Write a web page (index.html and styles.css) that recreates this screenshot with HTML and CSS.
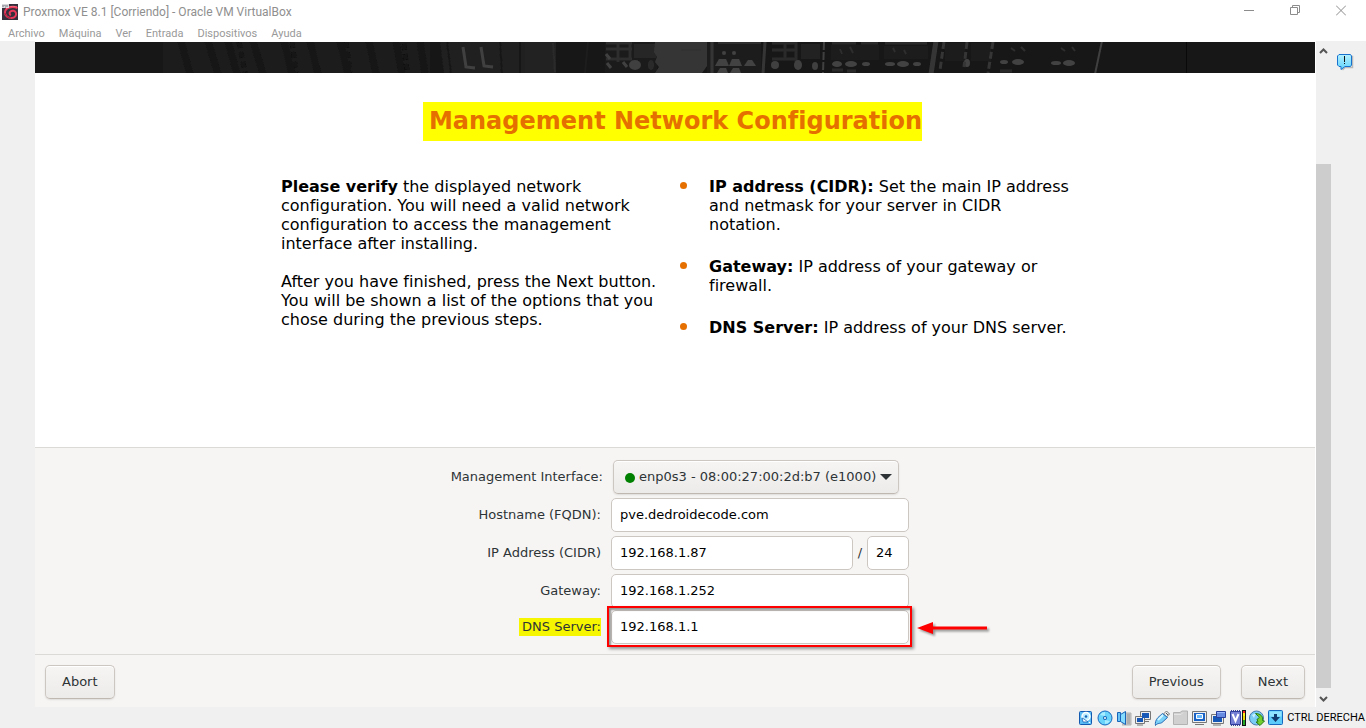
FILE: index.html
```html
<!DOCTYPE html>
<html lang="es">
<head>
<meta charset="utf-8">
<title>Proxmox VE 8.1 [Corriendo] - Oracle VM VirtualBox</title>
<link rel="stylesheet" href="styles.css">
</head>
<body>
<div class="window">
  <header class="titlebar">
    <svg class="app-icon" width="16" height="16" viewBox="0 0 16 16" aria-hidden="true">
      <rect width="16" height="16" fill="#35303c"/>
      <path d="M15.500 4C10 2 3.500 3.500 3 8c-.3 4 3 6 6.500 6 3.500 0 5-2.500 4.500-5-.8-2.500-4-3-5.500-1.500-1.500 1.200-1 3 .5 3.500" fill="none" stroke="#e8395a" stroke-width="2"/>
      <path d="M15 3C11 1.500 6 2.500 4 5" fill="none" stroke="#ff6d82"/>
      <path d="M3 9c.5 3 3 5 6 5" fill="none" stroke="#a81e3c"/>
      <rect width="7" height="4" fill="#d9d9dd"/>
      <path d="M1 1v2M3 1v1M3 3h1M5 1v2" stroke="#77777f" fill="none"/>
    </svg>
    <span class="title">Proxmox VE 8.1 [Corriendo] - Oracle VM VirtualBox</span>
    <div class="window-buttons">
      <button type="button" aria-label="Minimizar"><svg width="10" height="11" viewBox="0 0 10 11"><path d="M0 5.500h10" stroke="#8c8c8c"/></svg></button>
      <button type="button" aria-label="Restaurar"><svg width="10" height="11" viewBox="0 0 10 11" fill="none" stroke="#8c8c8c"><path d="M.5 2.500h7v7h-7zM2.500 2.500v-2h7v7h-2"/></svg></button>
      <button type="button" aria-label="Cerrar"><svg width="10" height="11" viewBox="0 0 10 11"><path d="M0 .500l10 10M10 .500l-10 10" stroke="#8c8c8c"/></svg></button>
    </div>
  </header>
  <nav class="menubar">
    <button type="button">Archivo</button>
    <button type="button">Máquina</button>
    <button type="button">Ver</button>
    <button type="button">Entrada</button>
    <button type="button">Dispositivos</button>
    <button type="button">Ayuda</button>
  </nav>

  <div class="workspace">
    <main class="guest">
      <div class="banner">
        <svg width="1280" height="31" viewBox="0 0 1280 31" aria-hidden="true">
          <defs>
            <filter id="soft" x="-5%" y="-20%" width="110%" height="140%"><feGaussianBlur stdDeviation=".6"/></filter>
          </defs>
          <rect width="1280" height="31" fill="#171717"/>
          <rect x="128" width="267" height="31" fill="#1c1c1c"/>
          <g stroke="#161616" stroke-width="7" filter="url(#soft)">
            <path d="M146-1l9 33M173-1l10 33M193-1l9 33M218-1l10 33M249-1l8 33M275-1l8 33M305-1l8 33M334-1l7 33M361-1l6 33M385-1l5 33"/>
            <path d="M204 0l6 31M257 0l4 31M311 0l4 31M369 2l3 27" stroke="#131313" stroke-width="5" stroke-dasharray="6 4"/>
          </g>
          <rect x="395" width="128" height="31" fill="#202020"/>
          <g filter="url(#soft)">
            <path d="M395 0h10l4 31h-14z" fill="#171717"/>
            <path d="M412 0l4 31M465 0l2 31M485 0v31" stroke="#191919" stroke-width="2"/>
            <rect x="490" width="33" height="31" fill="#242424"/>
            <path d="M428 5l3 20 9 1M446 5l3 19 9 1" fill="none" stroke="#404040" stroke-width="3"/>
            <path d="M518 1l2 29" stroke="#2a2a2a" stroke-width="2"/>
          </g>
          <rect x="521" width="49" height="31" fill="#171717"/>
          <path d="M550 31l3-31" stroke="#1d1d1d" stroke-width="2"/>
          <rect x="570" width="52" height="31" fill="#1b1b1b"/>
          <g filter="url(#soft)">
            <path d="M571 1h26M571 7h26M571 17h26M583 0v20M595 0v18" stroke="#2e2e2e" stroke-width="3"/>
            <path d="M571 12l4 5M572 21l4 5M588 20l4 5" stroke="#404040" stroke-width="3"/>
            <rect x="599" y="2" width="22" height="14" fill="#262626"/>
            <ellipse cx="600" cy="23" rx="6" ry="5" fill="#3f3f3f"/>
            <ellipse cx="616" cy="23" rx="3" ry="5" fill="#2b2b2b"/>
            <path d="M620 0h52v24l-5 7h-47l4-6-4-5 2-5-3-5z" fill="#363636"/>
            <path d="M646 8h20" stroke="#2b2b2b" stroke-width="1" fill="none"/>
            <rect x="672" y="0" width="54" height="31" fill="#1f1f1f"/>
            <path d="M677 0v31M730 0l-2 31" stroke="#363636" stroke-width="3"/>
            <path d="M683 1h43" stroke="#2d2d2d" stroke-width="2"/>
            <g fill="#424242">
              <circle cx="689" cy="11" r="2"/><circle cx="699" cy="11" r="2"/>
              <path d="M680 24l4-7h7l3 7zM694 24l3-7h7l3 7zM709 24l4-6h4l4 6zM682 31l3-5h6l2 5zM695 31l3-5h6l2 5z"/>
            </g>
            <path d="M737 1h24M737 8h24M737 17h24M750 0v18M761 0v20" stroke="#292929" stroke-width="3"/>
            <g fill="#3f3f3f"><circle cx="740" cy="23" r="4"/><ellipse cx="763" cy="23" rx="4" ry="5"/><ellipse cx="780" cy="24" rx="3" ry="4"/></g>
            <rect x="766" y="2" width="19" height="15" fill="#212121"/>
            <path d="M789 0l-1 31" stroke="#404040" stroke-width="2" stroke-dasharray="8 2"/>
            <path d="M797 1h24M826 1h17M850 1h42" stroke="#2c2c2c" stroke-width="3"/>
            <g fill="#1c1c1c"><rect x="796" y="3" width="48" height="15"/><rect x="849" y="4" width="44" height="13"/><rect x="910" y="1" width="20" height="18"/><rect x="936" y="1" width="20" height="18"/></g>
            <g stroke="#2e2e2e" stroke-width="2"><path d="M805 7l2 5M815 5l3 6M858 6l2 4M869 8l2 4M976 6l4 3M986 5l4 4M1026 6l4 3M1037 5l3 4"/></g>
            <g fill="#434343"><ellipse cx="802" cy="22" rx="5" ry="3"/><ellipse cx="816" cy="22" rx="6" ry="3"/><ellipse cx="831" cy="22" rx="4" ry="2"/><ellipse cx="855" cy="22" rx="5" ry="2"/><ellipse cx="868" cy="22" rx="6" ry="3"/><ellipse cx="882" cy="22" rx="4" ry="2"/><ellipse cx="932" cy="21" rx="3" ry="4"/><ellipse cx="969" cy="20" rx="4" ry="2"/><ellipse cx="983" cy="20" rx="6" ry="3"/><ellipse cx="1021" cy="21" rx="5" ry="2"/><ellipse cx="1034" cy="21" rx="6" ry="3"/></g>
            <path d="M797 28h11M812 29h9M965 29h12" stroke="#2b2b2b" stroke-width="3"/>
            <path d="M901-1l-5 33" stroke="#363636" stroke-width="5"/>
            <path d="M909 0l-4 28M932 0l-3 25M958 0l-5 31" stroke="#343434" stroke-width="3" stroke-dasharray="7 3"/>
            <path d="M1067-1l-7 33" stroke="#3f3f3f" stroke-width="2"/>
          </g>
          <path d="M1151.500 0v31" stroke="#090909"/>
        </svg>
      </div>

      <section class="intro">
        <h1><span class="heading-mark">Management Network Configuration</span></h1>
        <div class="columns">
          <div class="copy">
            <p><b>Please verify</b> the displayed network configuration. You will need a valid network configuration to access the management interface after installing.</p>
            <p>After you have finished, press the Next button. You will be shown a list of the options that you chose during the previous steps.</p>
          </div>
          <ul class="hints">
            <li><b>IP address (CIDR):</b> Set the main IP address and netmask for your server in CIDR notation.</li>
            <li><b>Gateway:</b> IP address of your gateway or firewall.</li>
            <li><b>DNS Server:</b> IP address of your DNS server.</li>
          </ul>
        </div>
      </section>

      <form class="settings">
        <div class="row row-interface">
          <label for="iface">Management Interface:</label>
          <div class="select-wrap">
            <select id="iface"><option>enp0s3 - 08:00:27:00:2d:b7 (e1000)</option></select>
            <span class="link-dot"></span>
            <svg class="caret" width="12" height="6" viewBox="0 0 12 6" aria-hidden="true"><path d="M0 0h12L6 6z" fill="#2e3436"/></svg>
          </div>
        </div>
        <div class="row">
          <label for="host">Hostname (FQDN):</label>
          <div class="field"><input id="host" type="text" value="pve.dedroidecode.com"></div>
        </div>
        <div class="row">
          <label for="ip">IP Address (CIDR)</label>
          <div class="field"><input id="ip" type="text" value="192.168.1.87"><span class="slash">/</span><input class="mask" type="text" value="24" aria-label="Netmask"></div>
        </div>
        <div class="row">
          <label for="gw">Gateway:</label>
          <div class="field"><input id="gw" type="text" value="192.168.1.252"></div>
        </div>
        <div class="row row-dns">
          <label for="dns"><span class="label-mark">DNS Server:</span></label>
          <div class="field">
            <input id="dns" type="text" value="192.168.1.1">
            <span class="callout"></span>
            <svg class="arrow" width="80" height="24" viewBox="0 0 80 24" aria-hidden="true"><path d="M1 12l16-6v4.500h54v3H17V18z" fill="#f00"/></svg>
          </div>
        </div>
      </form>

      <footer class="actions">
        <button type="button">Abort</button>
        <button type="button" class="push">Previous</button>
        <button type="button">Next</button>
      </footer>
    </main>

    <div class="scrollbar">
      <svg width="9" height="6" viewBox="0 0 9 6" aria-hidden="true"><path d="M1 5l3.500-3.500L8 5" fill="none" stroke="#555" stroke-width="2"/></svg>
      <div class="track"><div class="thumb"></div></div>
      <svg width="9" height="6" viewBox="0 0 9 6" aria-hidden="true"><path d="M1 1l3.500 3.500L8 1" fill="none" stroke="#555" stroke-width="2"/></svg>
    </div>
    <aside class="side">
      <svg width="17" height="17" viewBox="0 0 17 17" role="img" aria-label="Notificaciones">
        <defs><linearGradient id="bubble" x2="0" y2="1"><stop stop-color="#b5f1ff"/><stop offset="1" stop-color="#5fd2fb"/></linearGradient></defs>
        <path d="M3 2.500h12.500v11H8L5.500 16" fill="none" stroke="#b9b9b9" stroke-width="1.500"/>
        <path d="M2 .500h11.500l1 1.500v9l-1 1.500H8L4 15.500v-3H2L.5 11V2z" fill="url(#bubble)" stroke="#1a72cf"/>
        <path d="M7 2h1v6H7zM7 9h1v1H7z" fill="#111"/>
      </svg>
    </aside>
  </div>

  <footer class="statusbar">
    <svg width="16" height="16" viewBox="0 0 16 16" aria-hidden="true">
      <rect x="1.500" y="1.500" width="12" height="13" rx="1" fill="#59bcf4" stroke="#1459b0"/>
      <circle cx="8" cy="6.500" r="4" fill="#b9edff" stroke="#fff" stroke-width="1.500"/><circle cx="8" cy="6.500" r="1.300" fill="#1764b8"/>
      <path d="M4 8l1 4h5l-4-3z" fill="#fff" stroke="#1764b8" stroke-width=".8"/><circle cx="11.500" cy="12.500" r=".8" fill="#fff"/>
    </svg>
    <svg width="16" height="16" viewBox="0 0 16 16" aria-hidden="true">
      <circle cx="8" cy="8" r="7" fill="#6ad4fb" stroke="#1768bf"/><path d="M3 5a6 6 0 0 1 5-3v4zM13 11a6 6 0 0 1-5 3v-4z" fill="#a8ecff"/><circle cx="8" cy="8" r="2" fill="#1764b8"/><circle cx="8" cy="8" r="1" fill="#fff"/>
    </svg>
    <svg width="16" height="16" viewBox="0 0 16 16" aria-hidden="true">
      <path d="M7 3h8v12H6" fill="#c4c4c4" stroke="#b2b2b2"/><path d="M11 5h3M11 7h3M11 9h3M11 11h3M11 13h3" stroke="#999"/>
      <path d="M1.500 2.500h3v9h-3z" fill="#69c3f5" stroke="#1764b8"/><path d="M4.500 4.500l5-3v13l-5-3z" fill="#86dcff" stroke="#1764b8"/>
    </svg>
    <svg width="16" height="16" viewBox="0 0 16 16" aria-hidden="true">
      <g fill="#eee" stroke="#777"><path d="M5.500 1.500h10v8h-10zM8 11.500h6"/><path d="M.5 6.500h9v7h-9zM2 15h6"/></g>
      <path d="M7 3h7v5H7zM2 8h6v4H2z" fill="#1757b5"/>
    </svg>
    <svg width="16" height="16" viewBox="0 0 16 16" aria-hidden="true">
      <path d="M9.500 4L12.500 1l3 3-3 3z" fill="#eee" stroke="#777"/><path d="M12 3l2 2" stroke="#555"/>
      <path d="M8.500 3.500l5 4-5.500 5c-2 1.500-4 0-6.500 3C1 13 1.500 10 4 7.500z" fill="#78cff8" stroke="#296bb4"/><path d="M9 5L4 10" stroke="#d2f5ff" stroke-width="2"/>
    </svg>
    <svg width="16" height="16" viewBox="0 0 16 16" aria-hidden="true">
      <path d="M.5 14.500v-12H7l2-1.500h5.500v13.500z" fill="#d0d0d0" stroke="#b2b2b2"/><path d="M1 4.500h7l2-2" fill="none" stroke="#e4e4e4"/>
    </svg>
    <svg width="16" height="16" viewBox="0 0 16 16" aria-hidden="true">
      <path d="M.5 1.500h14v11h-14z" fill="#eee" stroke="#777"/><path d="M2 3h11v8H2z" fill="#1b62c5"/><path d="M4.500 4.500h6v4h-6z" fill="#6bbcff" stroke="#fff"/><path d="M3 14.500h9" stroke="#777"/>
    </svg>
    <svg width="16" height="16" viewBox="0 0 16 16" aria-hidden="true">
      <path d="M.5 4.500h12v9H.5z" fill="#eee" stroke="#777"/><path d="M2 6h9v6H2z" fill="#1757b5"/><path d="M2 15h8" stroke="#777"/><path d="M5.500 1.500h9v6h-9z" fill="#668be1" stroke="#293e9c"/><path d="M6 2.500h8" stroke="#9ebbff"/>
    </svg>
    <svg width="16" height="16" viewBox="0 0 16 16" aria-hidden="true">
      <path d="M.5 1.500h10v13H.5z" fill="#747fd4" stroke="#303c99"/><path d="M1 .500h9M1 15.500h9" stroke="#3e4697" stroke-dasharray="1 1"/><path d="M2.500 4l3 7 3-7" fill="none" stroke="#fff" stroke-width="2"/>
      <path d="M12 0h4v16h-4z" fill="#111"/><path d="M13 1h2v5h-2z" fill="#ffee19"/><path d="M13 1h2v2h-2z" fill="#f22"/><path d="M13 6h2v9h-2z" fill="#f2d800"/><path d="M13 10h2v5h-2z" fill="#24a528"/>
    </svg>
    <svg width="16" height="16" viewBox="0 0 16 16" aria-hidden="true">
      <circle cx="7.500" cy="8" r="7" fill="#79cdf5" stroke="#4a79ad"/><path d="M3 5l4-2-2 5z" fill="#c8effd"/>
      <path d="M6.500 3.500L9 6c2 1 1 3-1 3l1 3H7l4 3.500 4.500-4.500-2-.5c1-4-2-7-7-7z" fill="#72ce2f" stroke="#287b16"/>
    </svg>
    <svg width="16" height="16" viewBox="0 0 16 16" aria-hidden="true">
      <rect x=".5" y=".5" width="14" height="14" rx="1" fill="#5ccbfa" stroke="#1768bf"/><path d="M1.500 1.500h12v5h-12z" fill="#91e4ff"/><path d="M6 4h3v3h3l-4.500 5L3 7h3z" fill="#123c70"/>
    </svg>
    <span class="hostkey">CTRL DERECHA</span>
  </footer>
</div>
</body>
</html>
```

FILE: styles.css
```css
* { box-sizing: border-box; }
body { margin: 0; background: #fff; color: #000; font-family: "DejaVu Sans", sans-serif; }
button, input, select { font: inherit; color: inherit; }
svg { display: block; flex: none; }
.window { display: flex; flex-direction: column; min-height: 100vh; }

.titlebar { display: flex; align-items: center; height: 24px; padding: 0 2px; color: #8f8f8f; font: 12px/20px Roboto, "Open Sans", sans-serif; }
.title { margin-left: 5px; }
.window-buttons { display: flex; margin-left: auto; padding-bottom: 4px; }
.window-buttons button { display: flex; justify-content: center; width: 46px; padding: 0; border: 0; background: none; }
.menubar { display: flex; gap: 14px; height: 17px; padding-left: 8px; color: #999; font: 11px/17px Roboto, "Open Sans", sans-serif; }
.menubar button { padding: 1px 0 0; border: 0; background: none; }

.workspace { display: flex; flex: 1; padding-left: 35px; background: #f0f0f0; }
.guest { display: flex; flex: 1; flex-direction: column; min-width: 0; border-top: 1px solid #fff; border-right: 1px solid #fff; background: #fff; }
.banner { height: 31px; overflow: hidden; background: #171717; }

.intro { flex: 1; padding: 29px 16px 20px; }
h1 { display: flex; justify-content: center; margin: 0 0 36px; font-size: 24px; line-height: 39px; color: #e57000; }
.heading-mark { margin-right: 5px; padding-left: 6px; background: #ff0; }
.columns { display: grid; grid-template-columns: 376px 388px; justify-content: center; gap: 24px; font-size: 16px; line-height: 19px; }
.copy p { margin: 0 0 19px; }
.hints { display: grid; align-content: start; gap: 23px; margin: 0; padding: 0 0 0 28px; list-style: none; }
.hints li { position: relative; }
.hints li::before { content: ""; position: absolute; top: 5px; left: -29px; width: 7px; height: 7px; border-radius: 50%; background: #e57000; }

.settings { display: grid; gap: 4px; padding: 12px 16px 10px; border-top: 1px solid #dcdad7; background: #f6f5f4; color: #2e3436; font-size: 13px; }
.row { display: grid; grid-template-columns: 160px 298px; gap: 10px; justify-content: center; align-items: center; }
.row label { padding-bottom: 2px; text-align: right; white-space: nowrap; }
.row-interface { grid-template-columns: 162px 286px; padding-right: 10px; }
.field { position: relative; display: flex; }
.field input { flex: 1; min-width: 0; height: 34px; padding: 0 8px 2px; border: 1px solid #cdc7c2; border-radius: 5px; background: #fff; color: #000; }
.field input.mask { flex: none; width: 42px; }
.slash { width: 14px; line-height: 34px; text-align: center; }
.select-wrap { position: relative; }
.select-wrap select { display: block; width: 100%; height: 34px; padding: 0 8px 2px 25px; appearance: none; }
.select-wrap select, .actions button { border: 1px solid #cdc7c2; border-bottom-color: #bfb8b1; border-radius: 5px; background: linear-gradient(#f6f5f4, #edebe9); box-shadow: 0 1px 2px #0000001a, inset 0 1px #fff; }
.link-dot { position: absolute; top: 13px; left: 12px; width: 10px; height: 10px; border-radius: 50%; background: #008000; }
.caret { position: absolute; top: 14px; right: 7px; }
.row-dns { margin-top: -2px; }
.row-dns label { padding-bottom: 0; }
.label-mark { display: inline-block; padding-left: 3px; line-height: 18px; background: #f6f600; }
.callout { position: absolute; inset: -4px -3px -3px -4px; border: 2px solid #f00; box-shadow: 2px 2px 3px #0006, inset 2px 2px 2px #0006; pointer-events: none; }
.arrow { position: absolute; top: 6px; left: 305px; filter: drop-shadow(2px 2px 1px #0006); }

.actions { display: flex; gap: 20px; padding: 10px 10px 8px; border-top: 1px solid #dcdad7; background: #f6f5f4; color: #2e3436; font-size: 13px; }
.actions button { height: 34px; padding: 0 16px 2px; }
.actions .push { margin-left: auto; }

.scrollbar { display: flex; flex-direction: column; align-items: center; width: 15px; padding: 7px 0 5px; }
.track { display: flex; flex: 1; flex-direction: column; justify-content: flex-end; width: 100%; padding-bottom: 8px; }
.thumb { height: 82.7%; background: #cdcdcd; }
.side { display: flex; justify-content: center; width: 35px; padding: 13px 6px 0 0; }

.statusbar { display: flex; align-items: center; justify-content: flex-end; gap: 3px; height: 21px; padding-right: 1px; background: #f0f0f0; }
.hostkey { font: 11px/20px Roboto, "Noto Sans", sans-serif; white-space: nowrap; }
```
